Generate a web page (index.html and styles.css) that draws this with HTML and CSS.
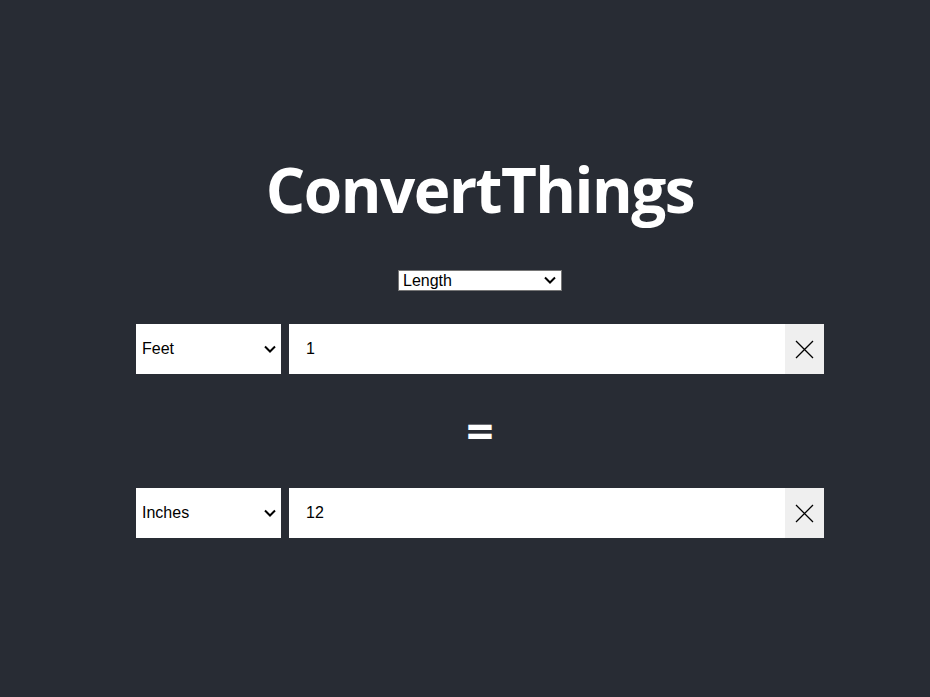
FILE: index.html
```html
<!DOCTYPE html>
<html>
<head>
<meta charset="utf-8">
<link rel="stylesheet" href="styles.css">
</head>
<body>
<div class="app">
  <h1 class="title">ConvertThings</h1>
  <div class="select-wrap kind-wrap">
    <select class="kind">
      <option>Length</option>
      <option>Mass</option>
      <option>Volume</option>
    </select>
    <svg class="chev" width="12" height="8" viewBox="0 0 12 8"><path d="M1 1.5 L6 6.5 L11 1.5" stroke="#000" stroke-width="2" fill="none"/></svg>
  </div>
  <div class="row">
    <div class="select-wrap unit-wrap">
      <select class="unit"><option>Feet</option><option>Inches</option></select>
      <svg class="chev" width="12" height="8" viewBox="0 0 12 8"><path d="M1 1.5 L6 6.5 L11 1.5" stroke="#000" stroke-width="2" fill="none"/></svg>
    </div>
    <div class="field">
      <input class="value" type="text" value="1">
      <button class="clear" aria-label="clear"><svg width="19" height="19" viewBox="0 0 19 19"><path d="M1 1 L18 18 M18 1 L1 18" stroke="#000" stroke-width="1.3" fill="none"/></svg></button>
    </div>
  </div>
  <div class="equals">=</div>
  <div class="row">
    <div class="select-wrap unit-wrap">
      <select class="unit"><option>Inches</option><option>Feet</option></select>
      <svg class="chev" width="12" height="8" viewBox="0 0 12 8"><path d="M1 1.5 L6 6.5 L11 1.5" stroke="#000" stroke-width="2" fill="none"/></svg>
    </div>
    <div class="field">
      <input class="value" type="text" value="12">
      <button class="clear" aria-label="clear"><svg width="19" height="19" viewBox="0 0 19 19"><path d="M1 1 L18 18 M18 1 L1 18" stroke="#000" stroke-width="1.3" fill="none"/></svg></button>
    </div>
  </div>
</div>
</body>
</html>
```
FILE: styles.css
```css
html, body {
  margin: 0;
  padding: 0;
  background: #282c34;
}
.app {
  min-height: 697px;
  box-sizing: border-box;
  padding: 149px 0 0 30px;
  display: flex;
  flex-direction: column;
  align-items: center;
  font-family: "Liberation Sans", Arial, sans-serif;
  color: #fff;
}
.title {
  font-family: "Open Sans", sans-serif;
  font-weight: 700;
  font-size: 62px;
  letter-spacing: -1.5px;
  margin: 0 0 41px;
  line-height: 80px;
}
.select-wrap {
  position: relative;
}
.select-wrap select {
  appearance: none;
  -webkit-appearance: none;
  display: block;
  box-sizing: border-box;
  background: #fff;
  color: #000;
  border-radius: 0;
  font-family: "Liberation Sans", Arial, sans-serif;
  font-size: 16px;
  outline: none;
}
.chev {
  position: absolute;
  pointer-events: none;
}
.kind-wrap {
  margin-bottom: 33px;
}
.kind {
  width: 164px;
  height: 21px;
  border: 1px solid #767676;
  padding: 0 0 0 4px;
}
.kind-wrap .chev {
  right: 6px;
  top: 6px;
}
.row {
  display: flex;
  gap: 8px;
  width: 688px;
  height: 50px;
}
.unit {
  width: 145px;
  height: 50px;
  border: none;
  padding: 0 0 1px 6px;
}
.unit-wrap .chev {
  right: 5px;
  top: 21px;
}
.field {
  flex: 1;
  display: flex;
}
.value {
  flex: 1;
  border: none;
  border-radius: 0;
  outline: none;
  height: 50px;
  box-sizing: border-box;
  padding: 0 0 1px 17px;
  font-family: "Liberation Sans", Arial, sans-serif;
  font-size: 16px;
  color: #000;
  background: #fff;
  min-width: 0;
}
.clear {
  width: 39px;
  height: 50px;
  border: none;
  background: #efefef;
  padding: 0;
  display: flex;
  align-items: center;
  justify-content: center;
}
.equals {
  font-family: "Open Sans", sans-serif;
  font-weight: 700;
  font-size: 48px;
  line-height: 114px;
  height: 114px;
}
```
